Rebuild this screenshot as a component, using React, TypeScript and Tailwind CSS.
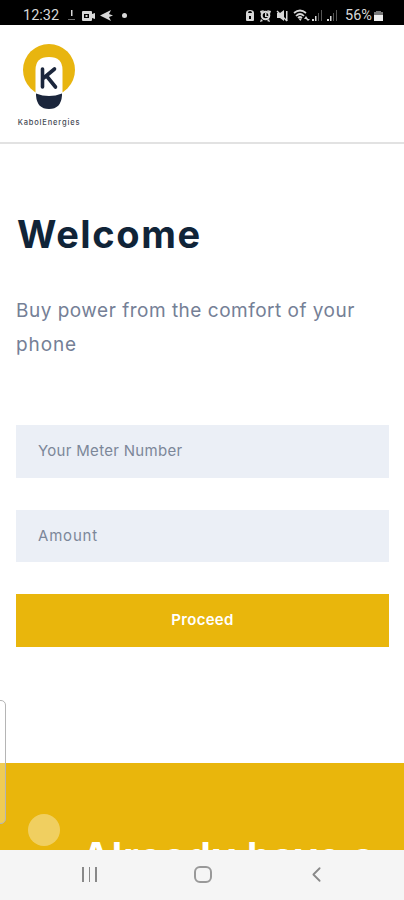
import { ChevronLeft } from "lucide-react";

function StatusBar() {
  return (
    <div className="flex h-[25px] shrink-0 items-center bg-black pt-[7px] font-['Roboto',sans-serif] text-[#d8d8d8]">
      <span className="ml-[23px] w-[37px] text-[14.5px] leading-none">12:32</span>
      <svg className="ml-2 h-4 w-[60px]" viewBox="0 0 60 16" fill="currentColor">
        <path d="M3 2h1.500v6H3z" />
        <path d="M0 11h7v1H0z" opacity=".5" />
        <path fillRule="evenodd" d="M15 3h8q1 0 1 1v2l3-1v6l-3-1v2q0 1-1 1h-8q-1 0-1-1V4q0-1 1-1zm1 3v4h5V6z" />
        <path d="M17.500 7h2v2h-2zM32 7.500 43 2l-2 4 4 1.500-4 1.500 2 4z" />
        <circle cx="56.500" cy="7.500" r="2.500" />
      </svg>
      <svg className="ml-auto h-4 w-[96px]" viewBox="0 0 96 16" fill="currentColor">
        <path fillRule="evenodd" d="M1 5q0-3 4-3t4 3v7q0 1-1 1H2q-1 0-1-1zm2 0h4q0-2-2-2T3 5zm1 3v3h2V8z" />
        <circle cx="20.500" cy="7.500" r="3.800" fill="none" stroke="currentColor" strokeWidth="2" />
        <path d="M20 5h1.500v3H23v1h-3zM15 3l4-1-3 4zM22 2l4 1-1 3zM16 11l2 2-3 1zM24 11l1 3-3-1z" />
        <path d="M32 5h3l4-3v11l-4-3h-3zM41 3h1.500v10H41z" />
        <path d="m32 3 10 10" stroke="currentColor" strokeWidth="1.400" />
        <path d="M49 5q6-5 12 0M51 8q4-4 8 0M53 10q2-2 4 0" fill="none" stroke="currentColor" strokeWidth="1.700" />
        <path d="M53.500 10.500h3.500L55.300 13zM61 8l2 3h-4zM63 13l-2-2h4z" />
        <path d="M67 11h2v2h-2zM70 8h1.500v5H70zM82 11h2v2h-2zM85 8h1.500v5H85z" />
        <path d="M73 5h1v8h-1zM76 2h1v11h-1zM88 5h1v8h-1zM91 2h1v11h-1z" opacity=".4" />
      </svg>
      <span className="ml-1 w-[29px] text-[14.500px] leading-none">56%</span>
      <svg className="mr-[21px] h-4 w-[9px]" viewBox="0 0 9 16">
        <path d="M2 3h5v1h2v3H0V4h2z" fill="#777" />
        <path d="M0 7h9v6H0z" fill="#eee" />
      </svg>
    </div>
  );
}

function Logo() {
  return (
    <div className="flex w-[64px] flex-col items-center">
      <svg className="h-[66px] w-[54px]" viewBox="0 0 54 66">
        <circle cx="27" cy="26" r="26" fill="#e8b50f" />
        <path d="M13.500 55V26q0-13 13.500-13t13.500 13v29z" fill="#fff" />
        <path d="M14 49.500q13 5 26 0v2Q39 65 27 65T14 51.500z" fill="#1b263c" />
        <path d="M20.500 25v18M32.500 25 21 34.500M25 32.500l8.500 10.500" fill="none" stroke="#1b263c" strokeWidth="3.600" strokeLinecap="round" />
      </svg>
      <span className="mt-[8px] font-['Inter',sans-serif] text-[7.500px] leading-[9px] font-medium tracking-[0.850px] whitespace-nowrap text-[#454a55]">
        KabolEnergies
      </span>
    </div>
  );
}

function NavBar() {
  return (
    <nav className="flex h-[50px] shrink-0 bg-[#f5f5f5] text-[#898989]">
      <div className="ml-[82px] flex w-4 gap-[5px] pt-[17px]">
        <span className="h-[15px] w-[1.500px] bg-current" />
        <span className="h-[15px] w-[1.500px] bg-current" />
        <span className="h-[15px] w-[1.500px] bg-current" />
      </div>
      <div className="mt-4 ml-24 h-[17px] w-[18px] rounded-[6px] border-2 border-[#999]" />
      <ChevronLeft className="mt-[12px] ml-[92px]" size={25} strokeWidth={1.7} />
    </nav>
  );
}

export default function App() {
  return (
    <div className="relative flex h-[900px] w-[404px] flex-col overflow-hidden bg-white font-['Inter',sans-serif]">
      <StatusBar />
      <header className="h-[119px] shrink-0 border-b-2 border-[#e2e2e2] pt-[19px] pl-[17px]">
        <Logo />
      </header>

      <main className="flex h-[619px] shrink-0 flex-col px-4 pt-[65px]">
        <h1 className="pl-px text-[38px] leading-[50px] font-bold tracking-[1.600px] text-[#102438]">Welcome</h1>
        <p className="mt-[35px] text-[19px] leading-[34px] tracking-[0.500px] whitespace-nowrap text-[#758096]">
          Buy power from the comfort of your
          <br />
          <span className="tracking-[0.900px]">phone</span>
        </p>
        <form className="mt-[63px] flex w-[373px] flex-col gap-8">
          <input
            className="h-[52.500px] bg-[#ebeff6] px-[22px] pb-[2px] text-[15px] tracking-[0.300px] placeholder:text-[#7c8799]"
            placeholder="Your Meter Number"
          />
          <input
            className="h-[52.500px] bg-[#ebeff6] px-[22px] pb-px text-[15px] tracking-[0.800px] placeholder:text-[#7c8799]"
            placeholder="Amount"
          />
          <button type="button" className="h-[52.500px] bg-[#e9b60c] text-[15px] font-semibold tracking-[0.300px] text-white">
            Proceed
          </button>
        </form>
      </main>

      <section className="h-[87px] shrink-0 overflow-hidden bg-[#e9b60c] pt-[68px] pl-[82px]">
        <h2 className="text-[38px] leading-[50px] font-bold tracking-[1.300px] whitespace-nowrap text-white">
          Already have a
        </h2>
      </section>
      <NavBar />

      {/* edge panel handle and floating touch button */}
      <div className="absolute top-[700px] -left-2 h-[124px] w-[14px] rounded-[5px] border border-[#b5b5b5] bg-white/30" />
      <div className="absolute top-[814px] left-[28px] h-8 w-8 rounded-full bg-white/35" />
    </div>
  );
}
